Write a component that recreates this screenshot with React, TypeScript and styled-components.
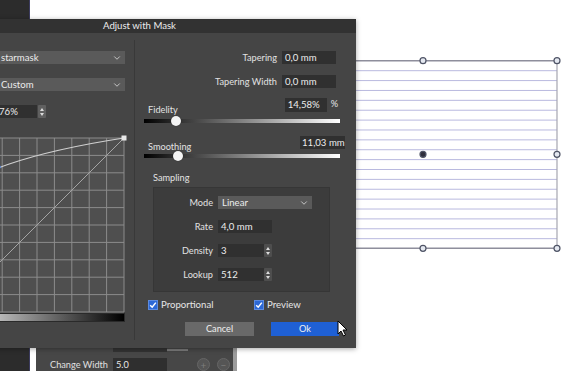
import React from 'react';
import styled, { createGlobalStyle } from 'styled-components';
import { ChevronDown } from 'lucide-react';

const GlobalStyle = createGlobalStyle`
  html, body {
    margin: 0;
    padding: 0;
    background: #ffffff;
    overflow: hidden;
  }
`;

const Desktop = styled.div`
  position: relative;
  width: 567px;
  height: 371px;
  display: flex;
  overflow: hidden;
  font-family: Lato, 'Noto Sans', sans-serif;
  font-size: 9.2px;
  color: #e6e6e6;
`;

const Sidebar = styled.div`
  width: 29px;
  flex-shrink: 0;
  background: #2c2c2c;
`;

const Canvas = styled.div`
  position: relative;
  flex: 1;
  background: #ffffff;
  border-left: 1px solid #3c3c5e;
`;

const Drawing = styled.svg`
  position: absolute;
  left: 0;
  top: 0;
`;

/* floating stroke panel under the dialog */
const StrokePanel = styled.div`
  position: absolute;
  left: 6px;
  top: 336px;
  width: 197px;
  height: 40px;
  background: #474747;
  border-right: 4px solid #9c9c9c;
  display: flex;
  flex-direction: column;
`;

const PanelRow = styled.div<{ $top: number }>`
  display: flex;
  align-items: center;
  height: 13px;
  margin-top: ${p => p.$top}px;
`;

const PanelLabel = styled.span`
  width: 72px;
  text-align: right;
  margin-right: 5px;
  color: #e0e0e0;
  white-space: nowrap;
`;

const PanelField = styled.div`
  width: 51px;
  height: 13px;
  padding-left: 3px;
  background: #2f2f2f;
  line-height: 13px;
  color: #e8e8e8;
`;

const PanelBar = styled.div`
  width: 21px;
  height: 2px;
  margin-top: 11px;
  background: #7a7a7a;
`;

const RoundButton = styled.div<{ $gap: number }>`
  width: 11px;
  height: 11px;
  margin-left: ${p => p.$gap}px;
  border-radius: 50%;
  background: #555555;
  border: 1px solid #666666;
  display: flex;
  align-items: center;
  justify-content: center;
  color: #7c7c7c;
  font-size: 10px;
  line-height: 10px;
`;

/* dialog window */
const Dialog = styled.div`
  position: absolute;
  left: -77px;
  top: 19px;
  width: 433px;
  height: 329px;
  background: #454545;
  box-shadow: 0 1px 5px rgba(0, 0, 0, 0.35);
  display: flex;
  flex-direction: column;
  z-index: 2;
`;

const TitleBar = styled.div`
  height: 14px;
  background: #323232;
  text-align: center;
  line-height: 14px;
  color: #ededed;
  font-size: 9.6px;
`;

const Body = styled.div`
  flex: 1;
  display: flex;
  padding: 7px 0 8px;
`;

const LeftPanel = styled.div`
  width: 212px;
  flex-shrink: 0;
  border-right: 1px solid #393939;
  display: flex;
  flex-direction: column;
  align-items: flex-end;
  padding-right: 9px;
  box-sizing: border-box;
`;

const Select = styled.div<{ $w: number; $top: number }>`
  width: ${p => p.$w}px;
  height: 13px;
  margin-top: ${p => p.$top}px;
  background: #5a5a5a;
  display: flex;
  align-items: center;
  justify-content: space-between;
  padding: 0 3px 0 4px;
  box-sizing: border-box;
  color: #ececec;
  flex-shrink: 0;
  font-size: 9.6px;
`;

const SpinRow = styled.div<{ $top: number }>`
  display: flex;
  align-items: center;
  gap: 1px;
  margin-top: ${p => p.$top}px;
`;

const Field = styled.div<{ $w: number }>`
  width: ${p => p.$w}px;
  height: 13px;
  background: #303030;
  padding-left: 3px;
  box-sizing: border-box;
  line-height: 13px;
  color: #ececec;
  flex-shrink: 0;
  white-space: nowrap;
  font-size: 9.6px;
`;

const SpinButtons = styled.div<{ $bg: string }>`
  width: 8px;
  height: 13px;
  background: ${p => p.$bg};
  border-radius: 1px;
  display: flex;
  flex-direction: column;
  align-items: center;
  justify-content: center;
  gap: 2px;
`;

const Arrow = styled.div<{ $up?: boolean }>`
  width: 0;
  height: 0;
  border-left: 2px solid transparent;
  border-right: 2px solid transparent;
  ${p => (p.$up ? 'border-bottom: 3px solid #dcdcdc;' : 'border-top: 3px solid #dcdcdc;')}
`;

const CurveBox = styled.div`
  width: 174px;
  height: 174px;
  margin-top: 20px;
  margin-right: 1px;
  background: #4f4f4f;
`;

const GradientBar = styled.div`
  width: 175px;
  height: 9px;
  margin-top: 1px;
  background: linear-gradient(to right, #ffffff, #000000);
  border: 1px solid #2a2a2a;
  box-sizing: border-box;
`;

const RightPanel = styled.div`
  flex: 1;
  display: flex;
  flex-direction: column;
  padding: 0 16px 0 9px;
`;

const FieldRow = styled.div<{ $top: number }>`
  display: flex;
  justify-content: flex-end;
  align-items: center;
  gap: 5px;
  margin-top: ${p => p.$top}px;
  margin-right: 4px;
`;

const Label = styled.span`
  color: #e2e2e2;
  white-space: nowrap;
`;

const SliderHead = styled.div<{ $top: number; $right: number }>`
  display: flex;
  align-items: flex-end;
  height: 14px;
  margin-top: ${p => p.$top}px;
  margin-right: ${p => p.$right}px;
  padding-left: 4px;
`;

const SliderLabel = styled(Label)`
  flex: 1;
  margin-bottom: -3px;
`;

const Unit = styled.span`
  margin-left: 4px;
  align-self: flex-start;
  line-height: 12px;
`;

const Slider = styled.div<{ $top: number }>`
  position: relative;
  height: 10px;
  margin-top: ${p => p.$top}px;
  display: flex;
  align-items: center;
`;

const Track = styled.div`
  width: 100%;
  height: 4px;
  background: linear-gradient(to right, #000000 0%, #2a2a2a 15%, #ffffff 100%);
`;

const Thumb = styled.div`
  position: absolute;
  top: 0;
  width: 10px;
  height: 10px;
  border-radius: 50%;
  background: #f4f4f4;
  box-shadow: 0 0 1px rgba(0, 0, 0, 0.6);
  transform: translateX(-5px);
`;

const GroupTitle = styled.div`
  margin: 10px 0 0 9px;
  height: 13px;
  line-height: 13px;
  color: #e2e2e2;
`;

const Group = styled.div`
  width: 177px;
  height: 105px;
  margin: 3px 0 0 9px;
  background: #3c3c3c;
  border: 1px solid #363636;
  box-sizing: border-box;
  padding-top: 8px;
  display: flex;
  flex-direction: column;
  gap: 11px;
`;

const GroupRow = styled.div`
  display: flex;
  align-items: center;
  height: 13px;
`;

const GroupLabel = styled(Label)`
  width: 59px;
  text-align: right;
  margin-right: 5px;
`;

const CheckRow = styled.div`
  display: flex;
  align-items: center;
  height: 11px;
  margin: 7px 0 0 4px;
`;

const Check = styled.label<{ $w: number }>`
  display: flex;
  align-items: center;
  gap: 3px;
  width: ${p => p.$w}px;
  color: #e6e6e6;
  font-size: 9.6px;
`;

const CheckBox = styled.span`
  width: 10px;
  height: 10px;
  background: #2c68d6;
  border: 1px solid #5c8be0;
  box-sizing: border-box;
  display: flex;
  align-items: center;
  justify-content: center;
`;

const ButtonRow = styled.div`
  display: flex;
  margin: 12px 0 0 41px;
  gap: 17px;
`;

const Button = styled.div<{ $primary?: boolean }>`
  width: ${p => (p.$primary ? 68 : 69)}px;
  height: 14px;
  line-height: 14px;
  text-align: center;
  background: ${p => (p.$primary ? '#1f60d4' : '#696969')};
  color: #f0f0f0;
`;

const Cursor = styled.svg`
  position: absolute;
  left: 337px;
  top: 320px;
  z-index: 3;
`;

const lineYs = Array.from({ length: 18 }, (_, i) => 70.7 + i * 9.88);
const gridSteps = Array.from({ length: 11 }, (_, i) => i * 17.4);

const Handle: React.FC<{ x: number; y: number; dark?: boolean }> = ({ x, y, dark }) => (
  <circle cx={x} cy={y} r={3} fill={dark ? '#2e2e3c' : '#e4e8f0'} stroke="#4f5466" strokeWidth={1.2} />
);

const Spin: React.FC<{ bg: string }> = ({ bg }) => (
  <SpinButtons $bg={bg}>
    <Arrow $up />
    <Arrow />
  </SpinButtons>
);

const Tick = () => (
  <svg width="8" height="8" viewBox="0 0 8 8">
    <path d="M1.2 4.2 L3.2 6.2 L6.8 1.6" fill="none" stroke="#ffffff" strokeWidth="1.5" />
  </svg>
);

export default function App() {
  return (
    <Desktop>
      <GlobalStyle />
      <Sidebar />
      <Canvas>
        <Drawing width="538" height="371">
          <g transform="translate(-30 0)">
            {lineYs.map(y => (
              <line key={y} x1={340} x2={557} y1={y} y2={y} stroke="#b9b9df" strokeWidth={1} />
            ))}
            <line x1={340} x2={557} y1={60.7} y2={60.7} stroke="#8e8e9c" strokeWidth={1.4} />
            <line x1={340} x2={557} y1={248.3} y2={248.3} stroke="#8e8e9c" strokeWidth={1.4} />
            <line x1={557} x2={557} y1={60.7} y2={248.3} stroke="#a6a6b0" strokeWidth={1.2} />
            <Handle x={423} y={60.7} />
            <Handle x={557} y={60.7} />
            <Handle x={423} y={154.3} dark />
            <Handle x={557} y={154.3} />
            <Handle x={423} y={248.3} />
            <Handle x={557} y={248.3} />
          </g>
        </Drawing>
        <StrokePanel>
          <PanelRow $top={2}>
            <PanelLabel />
            <PanelField style={{ height: 14, background: '#333333' }} />
            <PanelBar />
          </PanelRow>
          <PanelRow $top={7}>
            <PanelLabel>Change Width</PanelLabel>
            <PanelField>5.0</PanelField>
            <RoundButton $gap={30}>+</RoundButton>
            <RoundButton $gap={7}>−</RoundButton>
          </PanelRow>
        </StrokePanel>
      </Canvas>

      <Dialog>
        <TitleBar>Adjust with Mask</TitleBar>
        <Body>
          <LeftPanel>
            <Select $w={128} $top={11}>
              <span>starmask</span>
              <ChevronDown size={10} color="#d8d8d8" strokeWidth={2} />
            </Select>
            <Select $w={128} $top={14}>
              <span>Custom</span>
              <ChevronDown size={10} color="#d8d8d8" strokeWidth={2} />
            </Select>
            <SpinRow $top={14} style={{ marginRight: 79 }}>
              <Field $w={42} style={{ paddingLeft: 4 }}>76%</Field>
              <Spin bg="#606060" />
            </SpinRow>
            <CurveBox>
              <svg width="174" height="174" style={{ overflow: 'visible' }}>
                {gridSteps.map(s => (
                  <g key={s}>
                    <line x1={s} x2={s} y1={0} y2={174} stroke="#8c8c8c" strokeWidth={1} />
                    <line x1={0} x2={174} y1={s} y2={s} stroke="#8c8c8c" strokeWidth={1} />
                  </g>
                ))}
                <line x1={0} y1={174} x2={174} y2={0} stroke="#a4a4a4" strokeWidth={1} />
                <path d="M0 54 C 28 36, 70 16, 174 0" fill="none" stroke="#d0d0d0" strokeWidth={1.2} />
                <circle cx={49} cy={29} r={1.8} fill="#4d7fd6" />
                <rect x={171.5} y={-2.5} width={5} height={5} fill="#e8e8e8" />
              </svg>
            </CurveBox>
            <GradientBar />
          </LeftPanel>

          <RightPanel>
            <FieldRow $top={11}>
              <Label>Tapering</Label>
              <Field $w={54}>0,0 mm</Field>
            </FieldRow>
            <FieldRow $top={11}>
              <Label>Tapering Width</Label>
              <Field $w={54}>0,0 mm</Field>
            </FieldRow>

            <SliderHead $top={10} $right={2}>
              <SliderLabel>Fidelity</SliderLabel>
              <Field $w={42} style={{ height: 14, lineHeight: '14px' }}>14,58%</Field>
              <Unit>%</Unit>
            </SliderHead>
            <Slider $top={4}>
              <Track />
              <Thumb style={{ left: 32 }} />
            </Slider>

            <SliderHead $top={9} $right={-5}>
              <SliderLabel>Smoothing</SliderLabel>
              <Field $w={45} style={{ paddingLeft: 2 }}>11,03 mm</Field>
            </SliderHead>
            <Slider $top={2}>
              <Track />
              <Thumb style={{ left: 34 }} />
            </Slider>

            <GroupTitle>Sampling</GroupTitle>
            <Group>
              <GroupRow>
                <GroupLabel>Mode</GroupLabel>
                <Select $w={94} $top={0}>
                  <span>Linear</span>
                  <ChevronDown size={10} color="#d8d8d8" strokeWidth={2} />
                </Select>
              </GroupRow>
              <GroupRow>
                <GroupLabel>Rate</GroupLabel>
                <Field $w={54}>4,0 mm</Field>
              </GroupRow>
              <GroupRow>
                <GroupLabel>Density</GroupLabel>
                <Field $w={46}>3</Field>
                <Spin bg="#4e4e4e" />
              </GroupRow>
              <GroupRow>
                <GroupLabel>Lookup</GroupLabel>
                <Field $w={46}>512</Field>
                <Spin bg="#4e4e4e" />
              </GroupRow>
            </Group>

            <CheckRow>
              <Check $w={106}>
                <CheckBox>
                  <Tick />
                </CheckBox>
                Proportional
              </Check>
              <Check $w={80}>
                <CheckBox>
                  <Tick />
                </CheckBox>
                Preview
              </Check>
            </CheckRow>

            <ButtonRow>
              <Button>Cancel</Button>
              <Button $primary>Ok</Button>
            </ButtonRow>
          </RightPanel>
        </Body>
      </Dialog>

      <Cursor width="12" height="18" viewBox="0 0 12 18">
        <path d="M1 1 L1 14 L4 11 L6.5 16 L8.5 15 L6 10 L10 10 Z" fill="#ffffff" stroke="#000000" strokeWidth="1" />
      </Cursor>
    </Desktop>
  );
}
